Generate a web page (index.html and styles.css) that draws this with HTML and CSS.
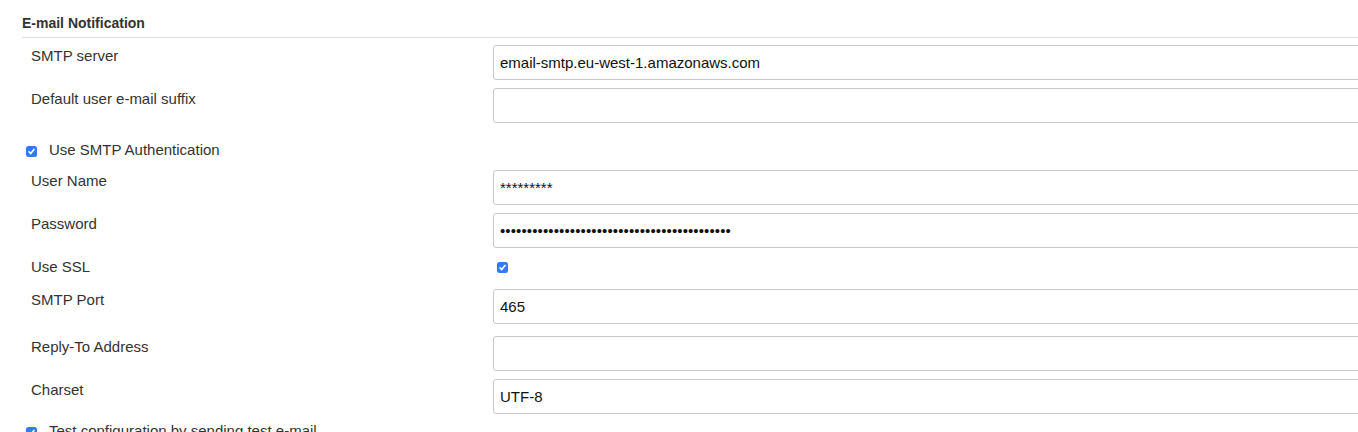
FILE: index.html
```html
<!DOCTYPE html>
<html>
<head>
<meta charset="utf-8">
<link rel="stylesheet" href="styles.css">
</head>
<body>
<div class="page">
  <div class="section">
    <div class="section-title">E-mail Notification</div>
    <div class="rows">
      <div class="row">
        <div class="label">SMTP server</div>
        <div class="field"><input class="text" type="text" value="email-smtp.eu-west-1.amazonaws.com"></div>
      </div>
      <div class="row">
        <div class="label">Default user e-mail suffix</div>
        <div class="field"><input class="text" type="text" value=""></div>
      </div>
      <div class="row check-row first-check">
        <span class="box"><svg viewBox="0 0 11 11" width="11" height="11"><path d="M3 5.8 L4.7 7.6 L8 3.4" fill="none" stroke="#fff" stroke-width="1.6" stroke-linecap="round" stroke-linejoin="round"/></svg></span>
        <span class="check-label">Use SMTP Authentication</span>
      </div>
      <div class="row">
        <div class="label">User Name</div>
        <div class="field"><input class="text" type="text" value="*********"></div>
      </div>
      <div class="row">
        <div class="label">Password</div>
        <div class="field"><input class="text pass" type="password" value="abcdefghijabcdefghijabcdefghijabcdefghijabc"></div>
      </div>
      <div class="row ssl-row">
        <div class="label">Use SSL</div>
        <div class="field"><span class="box"><svg viewBox="0 0 11 11" width="11" height="11"><path d="M3 5.8 L4.7 7.6 L8 3.4" fill="none" stroke="#fff" stroke-width="1.6" stroke-linecap="round" stroke-linejoin="round"/></svg></span></div>
      </div>
      <div class="row port-row">
        <div class="label">SMTP Port</div>
        <div class="field"><input class="text" type="text" value="465"></div>
      </div>
      <div class="row">
        <div class="label">Reply-To Address</div>
        <div class="field"><input class="text" type="text" value=""></div>
      </div>
      <div class="row">
        <div class="label">Charset</div>
        <div class="field"><input class="text" type="text" value="UTF-8"></div>
      </div>
      <div class="row check-row last-check">
        <span class="box"><svg viewBox="0 0 11 11" width="11" height="11"><path d="M3 5.8 L4.7 7.6 L8 3.4" fill="none" stroke="#fff" stroke-width="1.6" stroke-linecap="round" stroke-linejoin="round"/></svg></span>
        <span class="check-label">Test configuration by sending test e-mail</span>
      </div>
    </div>
  </div>
</div>
</body>
</html>
```

FILE: styles.css
```css
html, body {
  margin: 0;
  padding: 0;
  overflow: hidden;
  background: #fff;
}
body {
  font-family: "Liberation Sans", Arial, sans-serif;
  color: #333;
}
.page {
  width: 1420px;
  padding-left: 22px;
}
.section-title {
  font-size: 14px;
  font-weight: bold;
  line-height: 17px;
  padding-top: 15px;
  padding-bottom: 5px;
  border-bottom: 1px solid #e0e0e0;
  color: #333;
}
.rows {
  display: flex;
  flex-direction: column;
  gap: 8px;
  padding-top: 7px;
}
.row {
  display: grid;
  grid-template-columns: 471px 1fr;
  align-items: start;
}
.label {
  font-size: 15px;
  line-height: 17px;
  padding-left: 9px;
  padding-top: 2px;
}
.text {
  display: block;
  box-sizing: border-box;
  width: 100%;
  height: 35px;
  margin: 0;
  padding: 0 6px;
  border: 1px solid #c8c8c8;
  border-radius: 3px;
  font-family: "Liberation Sans", Arial, sans-serif;
  font-size: 15px;
  color: #111;
  background: #fff;
  outline: none;
}
.text.pass {
  letter-spacing: 0.12px;
}
.check-row {
  display: flex;
  align-items: center;
  font-size: 15px;
  line-height: 17px;
  padding-left: 4px;
}
.first-check {
  padding-top: 10px;
  padding-bottom: 4px;
}
.last-check {
  padding-top: 0;
}
.box {
  display: inline-block;
  width: 11px;
  height: 11px;
  border-radius: 2.5px;
  background: #2f7cf6;
  flex: none;
}
.box svg {
  display: block;
}
.check-row .box {
  margin-top: 4px;
}
.check-label {
  margin-left: 12px;
  color: #333;
}
.ssl-row {
  height: 25px;
}
.ssl-row .field {
  padding-top: 3px;
  padding-left: 4px;
}
.port-row {
  padding-bottom: 4px;
}
```
